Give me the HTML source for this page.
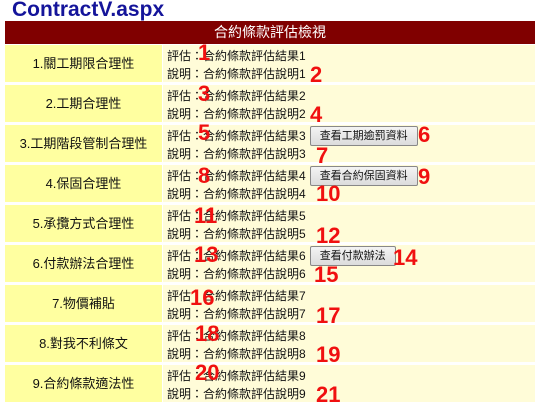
<!DOCTYPE html>
<html><head><meta charset="utf-8"><style>
body{margin:0;width:540px;height:413px;background:#fff;font-family:"Liberation Sans","Noto Sans CJK TC",sans-serif;position:relative;overflow:hidden}
.t{position:absolute;left:12px;top:-2px;font-size:21px;font-weight:bold;color:#14149a;letter-spacing:0px}
.h{position:absolute;left:5px;top:21px;width:530px;height:23px;background:#800000;color:#fff;font-size:14px;text-align:center;line-height:23px}
.r{position:absolute;left:5px;width:530px;height:37px}
.l{position:absolute;left:0;top:0;width:157px;height:37px;background:#ffffa0;font-size:13px;text-align:center;line-height:37px;color:#111}
.c{position:absolute;left:158px;top:0;width:372px;height:37px;background:#fffcd8;font-size:12px;color:#111;line-height:18px;padding-top:2px;box-sizing:border-box}
.c div{padding-left:4px;height:18px;white-space:nowrap}
.b{display:inline-block;vertical-align:top;margin-left:4px;margin-top:-1px;height:18px;padding:0 9px;border:1px solid #888;border-radius:2px;background:linear-gradient(#f4f4f4,#dcdcdc);font-size:11px;line-height:18px}
.n{position:absolute;color:#f01010;font-size:22px;font-weight:bold;line-height:22px;font-family:"Liberation Sans",sans-serif}
</style></head><body>
<div class="t">ContractV.aspx</div>
<div class="h">合約條款評估檢視</div>
<div class="r" style="top:45px"><div class="l">1.關工期限合理性</div><div class="c"><div>評估：合約條款評估結果1</div><div>說明：合約條款評估說明1</div></div></div>
<div class="r" style="top:85px"><div class="l">2.工期合理性</div><div class="c"><div>評估：合約條款評估結果2</div><div>說明：合約條款評估說明2</div></div></div>
<div class="r" style="top:125px"><div class="l">3.工期階段管制合理性</div><div class="c"><div>評估：合約條款評估結果3<span class="b">查看工期逾罰資料</span></div><div>說明：合約條款評估說明3</div></div></div>
<div class="r" style="top:165px"><div class="l">4.保固合理性</div><div class="c"><div>評估：合約條款評估結果4<span class="b">查看合約保固資料</span></div><div>說明：合約條款評估說明4</div></div></div>
<div class="r" style="top:205px"><div class="l">5.承攬方式合理性</div><div class="c"><div>評估：合約條款評估結果5</div><div>說明：合約條款評估說明5</div></div></div>
<div class="r" style="top:245px"><div class="l">6.付款辦法合理性</div><div class="c"><div>評估：合約條款評估結果6<span class="b">查看付款辦法</span></div><div>說明：合約條款評估說明6</div></div></div>
<div class="r" style="top:285px"><div class="l">7.物價補貼</div><div class="c"><div>評估：合約條款評估結果7</div><div>說明：合約條款評估說明7</div></div></div>
<div class="r" style="top:325px"><div class="l">8.對我不利條文</div><div class="c"><div>評估：合約條款評估結果8</div><div>說明：合約條款評估說明8</div></div></div>
<div class="r" style="top:365px"><div class="l">9.合約條款適法性</div><div class="c"><div>評估：合約條款評估結果9</div><div>說明：合約條款評估說明9</div></div></div>
<div class="n" style="left:198px;top:42px">1</div>
<div class="n" style="left:310px;top:64px">2</div>
<div class="n" style="left:198px;top:83px">3</div>
<div class="n" style="left:310px;top:104px">4</div>
<div class="n" style="left:198px;top:122px">5</div>
<div class="n" style="left:418px;top:124px">6</div>
<div class="n" style="left:316px;top:145px">7</div>
<div class="n" style="left:198px;top:165px">8</div>
<div class="n" style="left:418px;top:166px">9</div>
<div class="n" style="left:316px;top:183px">10</div>
<div class="n" style="left:194px;top:205px">11</div>
<div class="n" style="left:316px;top:225px">12</div>
<div class="n" style="left:194px;top:244px">13</div>
<div class="n" style="left:393px;top:247px">14</div>
<div class="n" style="left:314px;top:264px">15</div>
<div class="n" style="left:190px;top:287px">16</div>
<div class="n" style="left:316px;top:305px">17</div>
<div class="n" style="left:195px;top:323px">18</div>
<div class="n" style="left:316px;top:344px">19</div>
<div class="n" style="left:195px;top:362px">20</div>
<div class="n" style="left:316px;top:384px">21</div>
</body></html>
